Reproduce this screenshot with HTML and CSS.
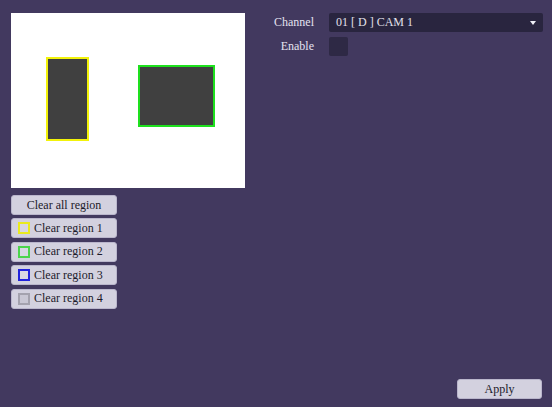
FILE: index.html
```html
<!DOCTYPE html>
<html>
<head>
<meta charset="utf-8">
<link rel="stylesheet" href="styles.css">
</head>
<body>
<div class="page">
  <div class="main">
    <div class="left">
      <div class="preview">
        <div class="region region-1"></div>
        <div class="region region-2"></div>
      </div>
      <div class="btns">
        <button class="btn btn-all">Clear all region</button>
        <button class="btn"><span class="sq sq-1"></span>Clear region 1</button>
        <button class="btn"><span class="sq sq-2"></span>Clear region 2</button>
        <button class="btn"><span class="sq sq-3"></span>Clear region 3</button>
        <button class="btn"><span class="sq sq-4"></span>Clear region 4</button>
      </div>
    </div>
    <div class="form">
      <div class="label">Channel</div>
      <div class="select"><span>01 [ D ] CAM 1</span><span class="arrow"></span></div>
      <div class="label">Enable</div>
      <div class="check"></div>
    </div>
  </div>
  <div class="footer">
    <button class="btn apply">Apply</button>
  </div>
</div>
</body>
</html>
```

FILE: styles.css
```css
html, body {
  margin: 0;
  padding: 0;
}
body {
  background: #42395f;
  font-family: "Liberation Serif", "Times New Roman", serif;
  font-size: 12px;
}
.page {
  width: 552px;
  height: 407px;
  display: flex;
  flex-direction: column;
}
.main {
  flex: 1;
  display: flex;
  padding: 13px 0 0 11px;
}
.left {
  width: 234px;
  display: flex;
  flex-direction: column;
}
.preview {
  position: relative;
  width: 234px;
  height: 175px;
  background: #ffffff;
}
.region {
  position: absolute;
  box-sizing: border-box;
  background: #404040;
  border: 2px solid;
}
.region-1 {
  left: 35px;
  top: 44px;
  width: 43px;
  height: 84px;
  border-color: #f2f20a;
}
.region-2 {
  left: 127px;
  top: 52px;
  width: 77px;
  height: 62px;
  border-color: #1ee01e;
}
.btns {
  margin-top: 7px;
  display: flex;
  flex-direction: column;
  gap: 3.4px;
}
.btn {
  box-sizing: border-box;
  width: 106px;
  height: 20px;
  margin: 0;
  padding: 0 0 0 6px;
  display: flex;
  align-items: center;
  gap: 4px;
  background: #d3d1df;
  border: 1px solid #bab6cc;
  border-radius: 3px;
  font-family: "Liberation Serif", "Times New Roman", serif;
  font-size: 12px;
  color: #1c1a2a;
  text-align: left;
}
.btn-all {
  justify-content: center;
  padding: 0;
}
.sq {
  box-sizing: border-box;
  width: 12px;
  height: 12px;
  border: 2px solid;
  background: #d9d7e3;
  flex: none;
}
.sq-1 { border-color: #eaea20; }
.sq-2 { border-color: #4cd44c; }
.sq-3 { border-color: #2222dd; }
.sq-4 { border-color: #a4a2ae; background: #c9c7d4; }
.form {
  margin-left: 20px;
  display: grid;
  grid-template-columns: 49px 214px;
  grid-auto-rows: 19px;
  column-gap: 15px;
  row-gap: 5px;
  align-items: center;
  align-content: start;
}
.label {
  text-align: right;
  color: #e4e2f0;
  font-size: 12px;
}
.select {
  height: 19px;
  background: #29253f;
  border-radius: 2px;
  display: flex;
  align-items: center;
  justify-content: space-between;
  padding: 0 7px 0 7px;
  color: #e2e0ea;
  box-sizing: border-box;
}
.arrow {
  width: 0;
  height: 0;
  border-left: 3px solid transparent;
  border-right: 3px solid transparent;
  border-top: 4px solid #f0f0f8;
}
.check {
  width: 19px;
  height: 19px;
  background: #2e2945;
  border-radius: 2px;
}
.footer {
  display: flex;
  justify-content: flex-end;
  padding: 0 10px 8px 0;
}
.apply {
  width: 85px;
  height: 20px;
  justify-content: center;
  padding: 0;
}
```
